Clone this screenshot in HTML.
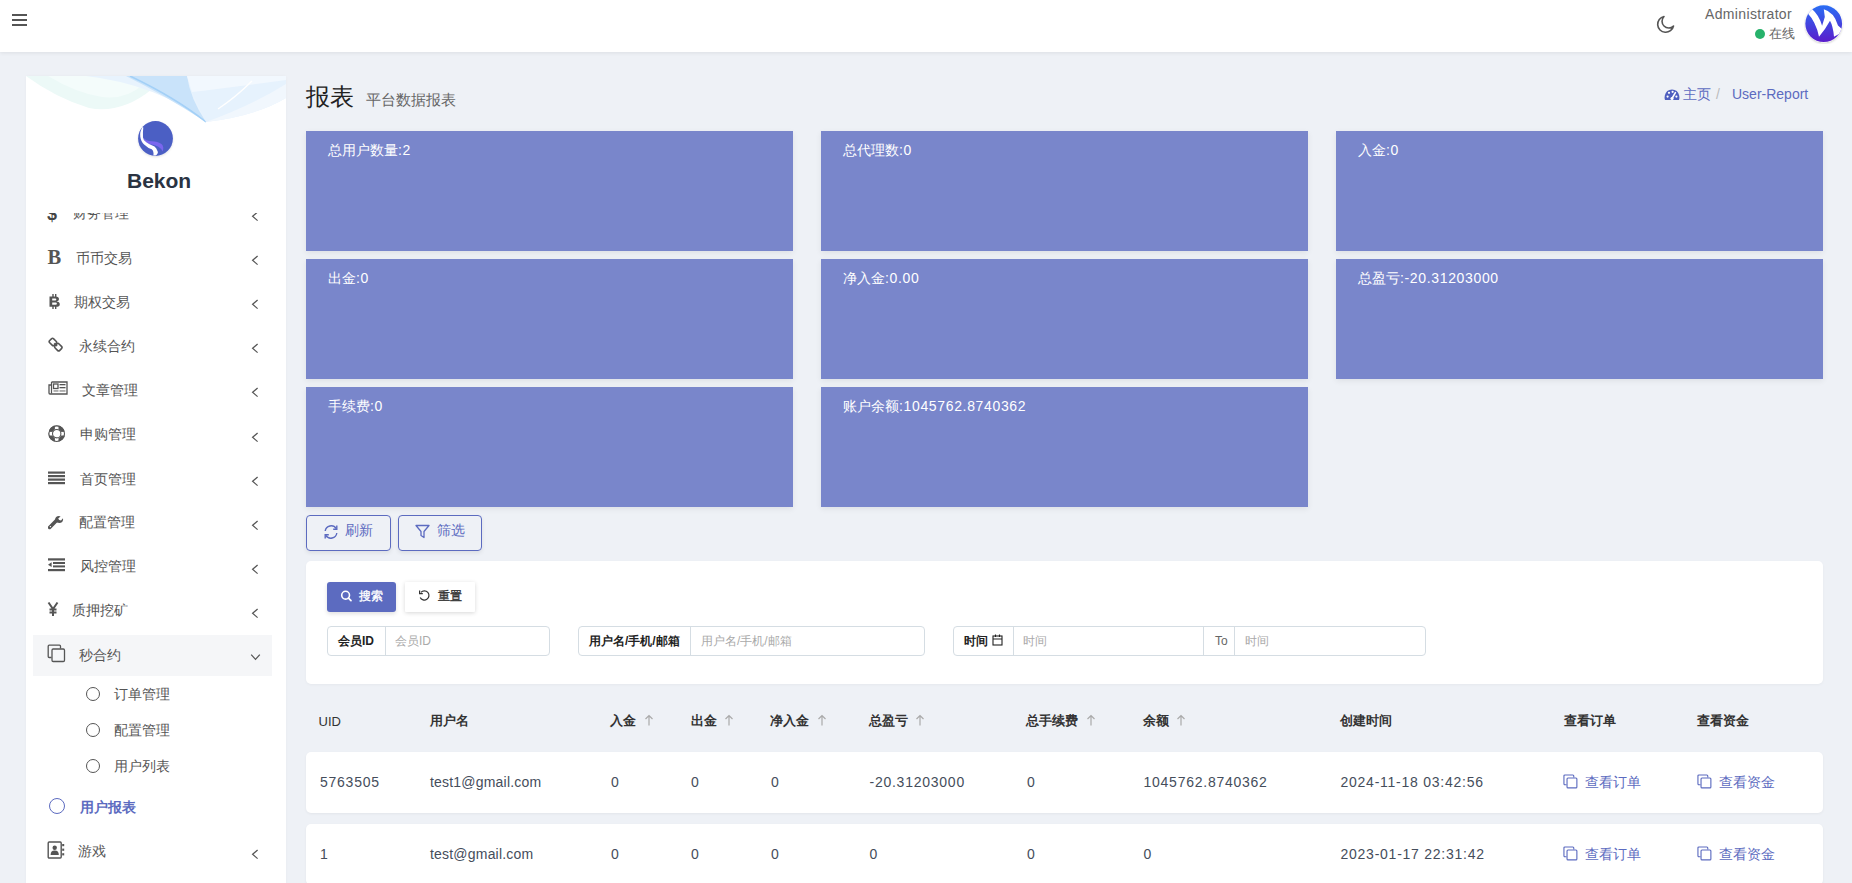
<!DOCTYPE html>
<html><head><meta charset="utf-8">
<style>
*{box-sizing:border-box;margin:0;padding:0}
html,body{width:1852px;height:883px;overflow:hidden}
body{background:#eef1f6;font-family:"Liberation Sans",sans-serif;position:relative;color:#3d4451}
.a{position:absolute;white-space:nowrap;line-height:1}
#hdr{position:absolute;left:0;top:0;width:1852px;height:52px;background:#fff;box-shadow:0 1px 4px rgba(0,0,0,.08)}
#side{position:absolute;left:26px;top:76px;width:260px;height:820px;background:#fff;box-shadow:0 0 3px rgba(0,0,0,.03);overflow:hidden}
.mi{position:absolute;font-size:14px;color:#555;line-height:1;margin-top:-1px}
.ch{position:absolute;left:226px;width:7px;height:7px;border-left:1.3px solid #555;border-bottom:1.3px solid #555;transform:rotate(45deg)}
.stat{position:absolute;width:487px;height:120px;background:#7986cb;color:#fff;font-size:14px;box-shadow:0 2px 6px rgba(0,0,0,.07)}
.stat span{position:absolute;left:22px;top:11.5px;line-height:1;white-space:nowrap}
.ob{position:absolute;top:515px;height:36px;border:1.3px solid #5c6bc0;border-radius:4px;color:#5c6bc0;font-size:14px;box-shadow:0 2px 4px rgba(0,0,0,.08)}
.grp{position:absolute;top:626px;height:30px;border:1px solid #d5dde3;border-radius:4px;background:#fff}
.grp .lb{position:absolute;top:0;height:28px;border-right:1px solid #d5dde3;font-size:12px;font-weight:bold;color:#222}
.ph{position:absolute;font-size:12px;color:#aaa;line-height:1;white-space:nowrap}
.th{position:absolute;top:714px;font-size:13px;font-weight:bold;color:#333;line-height:1;white-space:nowrap}
.row{position:absolute;left:306px;width:1517px;height:61px;background:#fff;border-radius:5px;box-shadow:0 1px 3px rgba(0,0,0,.05)}
.td{position:absolute;font-size:14px;color:#454d5b;line-height:1;white-space:nowrap;letter-spacing:.75px}
.lnk{position:absolute;font-size:14px;color:#5c6bc0;line-height:1;white-space:nowrap}
.arr{position:absolute;top:714px;width:10px;height:12px}
</style></head><body>

<div id="hdr">
  <svg class="a" style="left:12px;top:13px" width="15" height="13" viewBox="0 0 15 13"><rect x="0" y="1" width="15" height="2" fill="#555"/><rect x="0" y="6" width="15" height="2" fill="#555"/><rect x="0" y="11" width="15" height="2" fill="#555"/></svg>
  <svg class="a" style="left:1655px;top:15px" width="20" height="19" viewBox="0 0 20 19"><path d="M9 1.5 A8 8 0 1 0 18.5 11 A6.5 6.5 0 0 1 9 1.5 Z" fill="none" stroke="#555" stroke-width="1.6" stroke-linejoin="round"/></svg>
  <div class="a" style="left:1705px;top:7px;font-size:14px;color:#666;letter-spacing:.35px">Administrator</div>
  <div class="a" style="left:1755px;top:29px;width:10px;height:10px;border-radius:50%;background:#27b26b"></div>
  <div class="a" style="left:1768.5px;top:27.5px;font-size:12.5px;color:#666">在线</div>
  <svg class="a" style="left:1804px;top:4px" width="40" height="40" viewBox="0 0 40 40">
    <defs><linearGradient id="av" x1="0" y1="0" x2="0" y2="1"><stop offset="0" stop-color="#2a6ef4"/><stop offset="1" stop-color="#5a1ccb"/></linearGradient>
    <filter id="sh" x="-20%" y="-20%" width="140%" height="140%"><feDropShadow dx="0" dy="1" stdDeviation="1" flood-opacity=".22"/></filter>
    <clipPath id="avc"><circle cx="19.7" cy="19.7" r="18.4"/></clipPath></defs>
    <circle cx="19.7" cy="19.7" r="18.6" fill="#fff" filter="url(#sh)"/>
    <circle cx="19.7" cy="19.7" r="18.4" fill="url(#av)"/>
    <path clip-path="url(#avc)" d="M3 8.6 L8.2 5.2 Q15 11 18.1 21.7 L20.8 13 L19.8 5.2 Q30 8 34 21.4 L39 26 Q35 31 30 32.8 Q29 22 26 16.8 Q21 26 15 32.8 Q12 18 3 8.6 Z" fill="#fff"/>
  </svg>
</div>

<div id="side">
  <svg class="a" style="left:0;top:0" width="260" height="50" viewBox="0 0 260 50">
    <path d="M0 0 Q30 22 63 32 Q95 38 125 14 L135 0 Z" fill="#ecf9f7"/>
    <path d="M22 0 Q50 17 76 21 Q100 24 118 8 L124 0 Z" fill="#f4fcfb"/>
    <path d="M60 0 L260 0 L260 22 Q230 40 180 46 Q130 8 60 0 Z" fill="#e8f3fd"/>
    <path d="M100 0 L161 0 Q164 22 180 46 Q140 20 100 0 Z" fill="#c9e3fa"/>
    <path d="M104 0 Q150 22 180 46" fill="none" stroke="#a3d0f7" stroke-width="1.6"/>
    <path d="M166 16 Q200 12 260 4 L260 8 Q225 30 180 46 Q172 30 166 16 Z" fill="#e6f2fd"/>
    <path d="M161 0 L260 0 L260 4 Q200 12 166 16 Z" fill="#f2f8fe"/>
    <path d="M180 46 Q230 40 260 22 L260 8 Q225 30 180 46 Z" fill="#f1f7fd"/>
    <path d="M192 33 Q210 21 226 5" fill="none" stroke="#fff" stroke-width="1.4"/>
  </svg>
  <svg class="a" style="left:110px;top:43px" width="39" height="40" viewBox="-1 -1 39 40">
    <defs><filter id="lsh" x="-20%" y="-20%" width="140%" height="140%"><feDropShadow dx="0" dy="1" stdDeviation="1" flood-opacity=".12"/></filter></defs>
    <circle cx="18.5" cy="18.5" r="17.4" fill="#4b5ec4" filter="url(#lsh)"/>
    <path d="M6 17.4 Q9 21 14.7 21.2 Q21 21.5 24.5 24 Q27.5 27 25.6 31.5 Q24.5 28.5 21 26.5 Q17.5 24.6 12 24 Q8 22.5 6 17.4 Z" fill="#7a66ee"/>
    <path d="M5.5 7 Q2.5 12 3.3 16.8 Q4 22 7.1 24.4 Q11 28 14.7 29.3 Q17 31 16.4 35.6 L19 35.6 Q21.5 33 20.7 31.5 Q19.5 28 17.5 26.6 Q12 24.5 9.3 22.3 Q6 19.5 6 17.4 Q5.8 11 6.3 7.6 Z" fill="#fff"/>
  </svg>
  <div class="a" style="left:101px;top:93.5px;font-size:21px;font-weight:bold;color:#2a3342">Bekon</div>

  <div class="a" style="left:0;top:137px;width:260px;height:700px;overflow:hidden">
  </div>
</div>


<div class="a" style="left:0;top:0;width:300px;height:883px;clip-path:inset(213px 0 0 0)">
  <!-- 财务管理 -->
  <div class="a" style="left:47px;top:205px;font-size:18px;font-weight:bold;color:#444">$</div>
  <div class="mi" style="left:73px;top:206.5px">财务管理</div>
  <!-- 币币交易 -->
  <div class="a" style="left:47.6px;top:246.6px;font-family:'Liberation Serif',serif;font-weight:bold;font-size:20.5px;color:#555">B</div>
  <div class="mi" style="left:76px;top:251.5px">币币交易</div>
  <!-- 期权交易 -->
  <svg class="a" style="left:48px;top:293px" width="13" height="17" viewBox="0 0 13 17"><path d="M1.5 3.5 H7.5 Q11 3.5 11 6.2 Q11 8.2 8.5 8.5 Q11.8 8.9 11.8 11.2 Q11.8 13.8 8 13.8 H1.5 Z M4.2 5.6 V7.6 H7.2 Q8.3 7.6 8.3 6.6 Q8.3 5.6 7.2 5.6 Z M4.2 9.6 V11.8 H7.6 Q8.9 11.8 8.9 10.7 Q8.9 9.6 7.6 9.6 Z" fill="#555" fill-rule="evenodd"/><rect x="4.3" y="1" width="1.4" height="3" fill="#555"/><rect x="7" y="1" width="1.4" height="3" fill="#555"/><rect x="4.3" y="13" width="1.4" height="3" fill="#555"/><rect x="7" y="13" width="1.4" height="3" fill="#555"/></svg>
  <div class="mi" style="left:74.3px;top:295.5px">期权交易</div>
  <!-- 永续合约 -->
  <svg class="a" style="left:48px;top:337px" width="16" height="15" viewBox="0 0 16 15"><rect x="1.6" y="2.2" width="6.6" height="5.6" rx="1.6" transform="rotate(45 4.9 5)" fill="none" stroke="#555" stroke-width="1.6"/><rect x="7" y="7.4" width="6.6" height="5.6" rx="1.6" transform="rotate(45 10.3 10.2)" fill="none" stroke="#555" stroke-width="1.6"/><path d="M6.2 6.3 L9 9" stroke="#555" stroke-width="1.6"/></svg>
  <div class="mi" style="left:78.8px;top:339.5px">永续合约</div>
  <!-- 文章管理 -->
  <svg class="a" style="left:48px;top:381px" width="20" height="14" viewBox="0 0 20 14"><path d="M3.5 1 H19 V13 H2 Q1 13 1 12 V4 H3.5" fill="none" stroke="#555" stroke-width="1.3"/><path d="M3.5 1 V12.5" stroke="#555" stroke-width="1.2"/><rect x="5.5" y="3" width="4.5" height="4.5" fill="none" stroke="#555" stroke-width="1.3"/><rect x="11.5" y="3" width="6" height="1.3" fill="#555"/><rect x="11.5" y="6" width="6" height="1.3" fill="#555"/><rect x="5.5" y="9.2" width="5" height="1.5" fill="#999"/><rect x="11.5" y="9.2" width="6" height="1.5" fill="#999"/></svg>
  <div class="mi" style="left:81.8px;top:383.5px">文章管理</div>
  <!-- 申购管理 -->
  <svg class="a" style="left:48px;top:425px" width="18" height="18" viewBox="0 0 18 18"><circle cx="8.7" cy="8.7" r="6.5" fill="none" stroke="#555" stroke-width="3.6"/><rect x="6.9" y="0.8" width="3.6" height="3.6" fill="#fff"/><rect x="6.9" y="13" width="3.6" height="3.6" fill="#fff"/><rect x="0.8" y="6.9" width="3.6" height="3.6" fill="#fff"/><rect x="13" y="6.9" width="3.6" height="3.6" fill="#fff"/><circle cx="8.7" cy="8.7" r="7.8" fill="none" stroke="#555" stroke-width="1.1"/><circle cx="8.7" cy="8.7" r="4.2" fill="none" stroke="#555" stroke-width="1.1"/></svg>
  <div class="mi" style="left:80.4px;top:428px">申购管理</div>
  <!-- 首页管理 -->
  <svg class="a" style="left:48px;top:471px" width="18" height="14" viewBox="0 0 18 14"><rect x="0" y="0.5" width="17" height="2.2" fill="#555"/><rect x="0" y="4" width="17" height="2.2" fill="#555"/><rect x="0" y="7.5" width="17" height="2.2" fill="#555"/><rect x="0" y="11" width="17" height="2.2" fill="#555"/></svg>
  <div class="mi" style="left:80.3px;top:473px">首页管理</div>
  <!-- 配置管理 -->
  <svg class="a" style="left:48px;top:515px" width="16" height="15" viewBox="0 0 16 15"><path d="M1.6 12.4 L8.2 5.8" stroke="#555" stroke-width="3.6" stroke-linecap="round"/><path d="M7.2 6.2 Q6.4 2.6 9.4 1.2 Q11.4 0.6 12.6 1.4 L10.2 3.6 L11.2 5 L13 5.6 L15 3.2 Q15.6 5.4 14.2 7 Q12 8.8 9 7.6 Z" fill="#555"/><circle cx="2.4" cy="11.6" r=".7" fill="#fff"/></svg>
  <div class="mi" style="left:78.8px;top:516px">配置管理</div>
  <!-- 风控管理 -->
  <svg class="a" style="left:48px;top:558px" width="18" height="14" viewBox="0 0 18 14"><rect x="0" y="0.3" width="17" height="2.2" fill="#555"/><rect x="5" y="4" width="12" height="2" fill="#555"/><rect x="5" y="7.4" width="12" height="2" fill="#555"/><rect x="0" y="11" width="17" height="2.2" fill="#555"/><path d="M0 6.7 L3.6 4.3 V9.1 Z" fill="#555"/></svg>
  <div class="mi" style="left:79.6px;top:560px">风控管理</div>
  <!-- 质押挖矿 -->
  <svg class="a" style="left:47px;top:601px" width="12" height="16" viewBox="0 0 12 16"><path d="M1.5 1.5 L6 8 L10.5 1.5 M6 8 V15 M2.5 8.5 H9.5 M2.5 11.5 H9.5" fill="none" stroke="#555" stroke-width="2"/></svg>
  <div class="mi" style="left:72.1px;top:604.3px">质押挖矿</div>
  <!-- 秒合约 active -->
  <div class="a" style="left:33px;top:635px;width:239px;height:41px;background:#f5f6f8"></div>
  <svg class="a" style="left:47px;top:644px" width="19" height="19" viewBox="0 0 19 19"><path d="M4.5 13.5 H2.2 Q1.2 13.5 1.2 12.5 V2.2 Q1.2 1.2 2.2 1.2 H12.5 Q13.5 1.2 13.5 2.2 V4.5" fill="none" stroke="#555" stroke-width="1.3"/><rect x="5" y="5" width="12.5" height="12.5" rx="1.2" fill="none" stroke="#555" stroke-width="1.3"/></svg>
  <div class="mi" style="left:78.8px;top:648.7px">秒合约</div>
  <svg class="a" style="left:250px;top:652px" width="11" height="11" viewBox="0 0 11 11"><path d="M1.2 2.6 L5.5 7.4 L9.8 2.6" fill="none" stroke="#555" stroke-width="1.25"/></svg>
  <!-- sub -->
  <div class="a" style="left:85.5px;top:687px;width:14px;height:14px;border:1.5px solid #555;border-radius:50%"></div>
  <div class="mi" style="left:113.9px;top:687.5px">订单管理</div>
  <div class="a" style="left:85.5px;top:723px;width:14px;height:14px;border:1.5px solid #555;border-radius:50%"></div>
  <div class="mi" style="left:113.9px;top:723.5px">配置管理</div>
  <div class="a" style="left:85.5px;top:759px;width:14px;height:14px;border:1.5px solid #555;border-radius:50%"></div>
  <div class="mi" style="left:113.9px;top:759.5px">用户列表</div>
  <div class="a" style="left:48.5px;top:798px;width:16px;height:16px;border:1.8px solid #5c6bc0;border-radius:50%"></div>
  <div class="mi" style="left:80.1px;top:800.5px;color:#5c6bc0;font-weight:bold">用户报表</div>
  <!-- 游戏 -->
  <svg class="a" style="left:47px;top:841px" width="18" height="18" viewBox="0 0 18 18"><rect x="1.2" y="1" width="13" height="16" rx="1" fill="none" stroke="#555" stroke-width="1.4"/><circle cx="7.7" cy="6.8" r="2.2" fill="#555"/><path d="M3.6 14 Q3.6 9.6 7.7 9.6 Q11.8 9.6 11.8 14 Z" fill="#555"/><rect x="15.2" y="3" width="2" height="2.2" fill="#555"/><rect x="15.2" y="7.6" width="2" height="2.2" fill="#555"/><rect x="15.2" y="12.2" width="2" height="2.2" fill="#555"/></svg>
  <div class="mi" style="left:78px;top:845px">游戏</div>
  <svg class="a" style="left:251px;top:211.0px" width="8" height="11" viewBox="0 0 8 11"><path d="M6.6 1 L1.6 5.3 L6.6 9.6" fill="none" stroke="#555" stroke-width="1.25"/></svg>
  <svg class="a" style="left:251px;top:255.0px" width="8" height="11" viewBox="0 0 8 11"><path d="M6.6 1 L1.6 5.3 L6.6 9.6" fill="none" stroke="#555" stroke-width="1.25"/></svg>
  <svg class="a" style="left:251px;top:299.0px" width="8" height="11" viewBox="0 0 8 11"><path d="M6.6 1 L1.6 5.3 L6.6 9.6" fill="none" stroke="#555" stroke-width="1.25"/></svg>
  <svg class="a" style="left:251px;top:343.0px" width="8" height="11" viewBox="0 0 8 11"><path d="M6.6 1 L1.6 5.3 L6.6 9.6" fill="none" stroke="#555" stroke-width="1.25"/></svg>
  <svg class="a" style="left:251px;top:387.0px" width="8" height="11" viewBox="0 0 8 11"><path d="M6.6 1 L1.6 5.3 L6.6 9.6" fill="none" stroke="#555" stroke-width="1.25"/></svg>
  <svg class="a" style="left:251px;top:431.5px" width="8" height="11" viewBox="0 0 8 11"><path d="M6.6 1 L1.6 5.3 L6.6 9.6" fill="none" stroke="#555" stroke-width="1.25"/></svg>
  <svg class="a" style="left:251px;top:476.0px" width="8" height="11" viewBox="0 0 8 11"><path d="M6.6 1 L1.6 5.3 L6.6 9.6" fill="none" stroke="#555" stroke-width="1.25"/></svg>
  <svg class="a" style="left:251px;top:520.0px" width="8" height="11" viewBox="0 0 8 11"><path d="M6.6 1 L1.6 5.3 L6.6 9.6" fill="none" stroke="#555" stroke-width="1.25"/></svg>
  <svg class="a" style="left:251px;top:564.0px" width="8" height="11" viewBox="0 0 8 11"><path d="M6.6 1 L1.6 5.3 L6.6 9.6" fill="none" stroke="#555" stroke-width="1.25"/></svg>
  <svg class="a" style="left:251px;top:608.0px" width="8" height="11" viewBox="0 0 8 11"><path d="M6.6 1 L1.6 5.3 L6.6 9.6" fill="none" stroke="#555" stroke-width="1.25"/></svg>
  <svg class="a" style="left:251px;top:848.5px" width="8" height="11" viewBox="0 0 8 11"><path d="M6.6 1 L1.6 5.3 L6.6 9.6" fill="none" stroke="#555" stroke-width="1.25"/></svg>
</div>

<!-- content -->
<div class="a" style="left:306px;top:85px;font-size:24px;color:#222">报表</div>
<div class="a" style="left:366px;top:92px;font-size:15px;color:#666">平台数据报表</div>
<svg class="a" style="left:1664px;top:88px" width="16" height="13" viewBox="0 0 16 13"><path d="M1 12 Q0.2 10 0.8 7.6 Q2.2 1.8 8 1.6 Q13.8 1.8 15.2 7.6 Q15.8 10 15 12 Z" fill="#4f5fbf"/><circle cx="3.6" cy="8.6" r="1.1" fill="#fff"/><circle cx="5" cy="4.8" r="1.1" fill="#fff"/><circle cx="8.6" cy="3.8" r="1.1" fill="#fff"/><circle cx="12.4" cy="8.6" r="1.1" fill="#fff"/><path d="M8 10.5 L11.4 4.6" stroke="#fff" stroke-width="1.6" stroke-linecap="round"/><circle cx="8" cy="10.5" r="1.6" fill="#fff"/></svg>
<div class="a" style="left:1682.5px;top:86.5px;font-size:14px;color:#5c6bc0">主页</div>
<div class="a" style="left:1716px;top:87px;font-size:14px;color:#bbb">/</div>
<div class="a" style="left:1732px;top:87px;font-size:14px;color:#5c6bc0">User-Report</div>

<div class="stat" style="left:306px;top:131px"><span>总用户数量<i style="font-style:normal;letter-spacing:.65px">:2</i></span></div>
<div class="stat" style="left:821px;top:131px"><span>总代理数<i style="font-style:normal;letter-spacing:.65px">:0</i></span></div>
<div class="stat" style="left:1336px;top:131px"><span>入金<i style="font-style:normal;letter-spacing:.65px">:0</i></span></div>
<div class="stat" style="left:306px;top:259px"><span>出金<i style="font-style:normal;letter-spacing:.65px">:0</i></span></div>
<div class="stat" style="left:821px;top:259px"><span>净入金<i style="font-style:normal;letter-spacing:.65px">:0.00</i></span></div>
<div class="stat" style="left:1336px;top:259px"><span>总盈亏<i style="font-style:normal;letter-spacing:.65px">:-20.31203000</i></span></div>
<div class="stat" style="left:306px;top:387px"><span>手续费<i style="font-style:normal;letter-spacing:.65px">:0</i></span></div>
<div class="stat" style="left:821px;top:387px"><span>账户余额<i style="font-style:normal;letter-spacing:.65px">:1045762.8740362</i></span></div>

<div class="ob" style="left:306px;width:85px"></div>
<div class="ob" style="left:398px;width:84px"></div>
<svg class="a" style="left:323px;top:524px" width="16" height="16" viewBox="0 0 16 16"><path d="M2.2 7 A6 6 0 0 1 13.2 4.6 M13.8 9 A6 6 0 0 1 2.8 11.4" fill="none" stroke="#5c6bc0" stroke-width="1.4"/><path d="M13.8 1.5 V5.2 H10.2" fill="none" stroke="#5c6bc0" stroke-width="1.4"/><path d="M2.2 14.5 V10.8 H5.8" fill="none" stroke="#5c6bc0" stroke-width="1.4"/></svg>
<div class="a" style="left:345px;top:523px;font-size:14px;color:#5c6bc0">刷新</div>
<svg class="a" style="left:415px;top:524px" width="15" height="15" viewBox="0 0 15 15"><path d="M1 1.5 H14 L9 7.5 V13.5 L6 11.5 V7.5 Z" fill="none" stroke="#5c6bc0" stroke-width="1.3" stroke-linejoin="round"/></svg>
<div class="a" style="left:436.5px;top:523px;font-size:14px;color:#5c6bc0">筛选</div>

<div class="a" style="left:306px;top:561px;width:1517px;height:123px;background:#fff;border-radius:5px;box-shadow:0 1px 3px rgba(0,0,0,.04)"></div>


<div class="a" style="left:327px;top:582px;width:69px;height:30px;background:#5c6bc0;border-radius:3px;box-shadow:0 2px 4px rgba(0,0,0,.12)"></div>
<svg class="a" style="left:340px;top:589px" width="13" height="14" viewBox="0 0 13 14"><circle cx="5.6" cy="6.2" r="3.9" fill="none" stroke="#fff" stroke-width="1.6"/><path d="M8.5 9.1 L11 11.6" stroke="#fff" stroke-width="1.7" stroke-linecap="round"/></svg>
<div class="a" style="left:358.5px;top:589.5px;font-size:12px;color:#fff;-webkit-text-stroke:.35px #fff">搜索</div>
<div class="a" style="left:405px;top:582px;width:70px;height:30px;background:#fff;border-radius:1px;box-shadow:0 1px 4px rgba(0,0,0,.16)"></div>
<svg class="a" style="left:418px;top:589px" width="13" height="13" viewBox="0 0 13 13"><path d="M2.9 3.4 A4.6 4.6 0 1 1 2.2 8.4" fill="none" stroke="#333" stroke-width="1.2"/><path d="M1.6 1.4 V4.6 H4.8" fill="none" stroke="#333" stroke-width="1.2"/></svg>
<div class="a" style="left:437.5px;top:589.5px;font-size:12px;color:#333;-webkit-text-stroke:.35px #333">重置</div>

<div class="grp" style="left:327px;width:223px"><div class="lb" style="left:0;width:58px"></div></div>
<div class="a" style="left:338px;top:635px;font-size:12px;font-weight:bold;color:#222">会员ID</div>
<div class="ph" style="left:395px;top:635px">会员ID</div>

<div class="grp" style="left:578px;width:347px"><div class="lb" style="left:0;width:112px"></div></div>
<div class="a" style="left:589px;top:635px;font-size:12px;font-weight:bold;color:#222">用户名/手机/邮箱</div>
<div class="ph" style="left:701px;top:635px">用户名/手机/邮箱</div>

<div class="grp" style="left:953px;width:473px"><div class="lb" style="left:0;width:60px"></div><div class="lb" style="left:249px;width:32px;border-left:1px solid #d5dde3"></div></div>
<div class="a" style="left:964px;top:635px;font-size:12px;font-weight:bold;color:#222">时间</div>
<svg class="a" style="left:992px;top:634px" width="11" height="12" viewBox="0 0 11 12"><rect x="1" y="2" width="9" height="9" fill="none" stroke="#222" stroke-width="1.1"/><path d="M1 5 H10 M3.5 0.5 V3 M7.5 0.5 V3" stroke="#222" stroke-width="1.1"/></svg>
<div class="ph" style="left:1023px;top:635px">时间</div>
<div class="a" style="left:1215px;top:635px;font-size:12px;color:#666">To</div>
<div class="ph" style="left:1245px;top:635px">时间</div>

<div class="th" style="left:318.5px;top:715px;font-weight:normal;color:#333">UID</div>
<div class="th" style="left:430px">用户名</div>
<div class="th" style="left:610px">入金</div>
<div class="th" style="left:690.5px">出金</div>
<div class="th" style="left:770px">净入金</div>
<div class="th" style="left:869px">总盈亏</div>
<div class="th" style="left:1026px">总手续费</div>
<div class="th" style="left:1142.5px">余额</div>
<div class="th" style="left:1339.5px">创建时间</div>
<div class="th" style="left:1563.5px">查看订单</div>
<div class="th" style="left:1697px">查看资金</div>
<svg class="arr" style="left:643.5px" viewBox="0 0 10 12"><path d="M5 11.5 V1.5 M1.5 5 L5 1.5 L8.5 5" fill="none" stroke="#aaa" stroke-width="1.2"/></svg>
<svg class="arr" style="left:724.0px" viewBox="0 0 10 12"><path d="M5 11.5 V1.5 M1.5 5 L5 1.5 L8.5 5" fill="none" stroke="#aaa" stroke-width="1.2"/></svg>
<svg class="arr" style="left:816.5px" viewBox="0 0 10 12"><path d="M5 11.5 V1.5 M1.5 5 L5 1.5 L8.5 5" fill="none" stroke="#aaa" stroke-width="1.2"/></svg>
<svg class="arr" style="left:915.0px" viewBox="0 0 10 12"><path d="M5 11.5 V1.5 M1.5 5 L5 1.5 L8.5 5" fill="none" stroke="#aaa" stroke-width="1.2"/></svg>
<svg class="arr" style="left:1085.5px" viewBox="0 0 10 12"><path d="M5 11.5 V1.5 M1.5 5 L5 1.5 L8.5 5" fill="none" stroke="#aaa" stroke-width="1.2"/></svg>
<svg class="arr" style="left:1176.0px" viewBox="0 0 10 12"><path d="M5 11.5 V1.5 M1.5 5 L5 1.5 L8.5 5" fill="none" stroke="#aaa" stroke-width="1.2"/></svg>
<div class="row" style="top:752px"></div>
<div class="td" style="left:320.0px;top:775.0px;">5763505</div>
<div class="td" style="left:430.0px;top:775.0px;letter-spacing:.2px">test1@gmail.com</div>
<div class="td" style="left:611.0px;top:775.0px;">0</div>
<div class="td" style="left:691.0px;top:775.0px;">0</div>
<div class="td" style="left:771.0px;top:775.0px;">0</div>
<div class="td" style="left:869.5px;top:775.0px;">-20.31203000</div>
<div class="td" style="left:1027.0px;top:775.0px;">0</div>
<div class="td" style="left:1143.5px;top:775.0px;">1045762.8740362</div>
<div class="td" style="left:1340.5px;top:775.0px;">2024-11-18 03:42:56</div>
<svg class="a" style="left:1563.4px;top:774.1px" width="15" height="15" viewBox="0 0 16 16"><path d="M3.8 11.5 H2 Q1 11.5 1 10.5 V2 Q1 1 2 1 H10.5 Q11.5 1 11.5 2 V3.8" fill="none" stroke="#5c6bc0" stroke-width="1.2"/><rect x="4.3" y="4.3" width="10.5" height="10.5" rx="1" fill="none" stroke="#5c6bc0" stroke-width="1.2"/></svg>
<div class="lnk" style="left:1585.0px;top:775.0px">查看订单</div>
<svg class="a" style="left:1696.9px;top:774.1px" width="15" height="15" viewBox="0 0 16 16"><path d="M3.8 11.5 H2 Q1 11.5 1 10.5 V2 Q1 1 2 1 H10.5 Q11.5 1 11.5 2 V3.8" fill="none" stroke="#5c6bc0" stroke-width="1.2"/><rect x="4.3" y="4.3" width="10.5" height="10.5" rx="1" fill="none" stroke="#5c6bc0" stroke-width="1.2"/></svg>
<div class="lnk" style="left:1718.5px;top:775.0px">查看资金</div>
<div class="row" style="top:824px"></div>
<div class="td" style="left:320.0px;top:847.0px;">1</div>
<div class="td" style="left:430.0px;top:847.0px;letter-spacing:.2px">test@gmail.com</div>
<div class="td" style="left:611.0px;top:847.0px;">0</div>
<div class="td" style="left:691.0px;top:847.0px;">0</div>
<div class="td" style="left:771.0px;top:847.0px;">0</div>
<div class="td" style="left:869.5px;top:847.0px;">0</div>
<div class="td" style="left:1027.0px;top:847.0px;">0</div>
<div class="td" style="left:1143.5px;top:847.0px;">0</div>
<div class="td" style="left:1340.5px;top:847.0px;">2023-01-17 22:31:42</div>
<svg class="a" style="left:1563.4px;top:846.1px" width="15" height="15" viewBox="0 0 16 16"><path d="M3.8 11.5 H2 Q1 11.5 1 10.5 V2 Q1 1 2 1 H10.5 Q11.5 1 11.5 2 V3.8" fill="none" stroke="#5c6bc0" stroke-width="1.2"/><rect x="4.3" y="4.3" width="10.5" height="10.5" rx="1" fill="none" stroke="#5c6bc0" stroke-width="1.2"/></svg>
<div class="lnk" style="left:1585.0px;top:847.0px">查看订单</div>
<svg class="a" style="left:1696.9px;top:846.1px" width="15" height="15" viewBox="0 0 16 16"><path d="M3.8 11.5 H2 Q1 11.5 1 10.5 V2 Q1 1 2 1 H10.5 Q11.5 1 11.5 2 V3.8" fill="none" stroke="#5c6bc0" stroke-width="1.2"/><rect x="4.3" y="4.3" width="10.5" height="10.5" rx="1" fill="none" stroke="#5c6bc0" stroke-width="1.2"/></svg>
<div class="lnk" style="left:1718.5px;top:847.0px">查看资金</div>
</body></html>
